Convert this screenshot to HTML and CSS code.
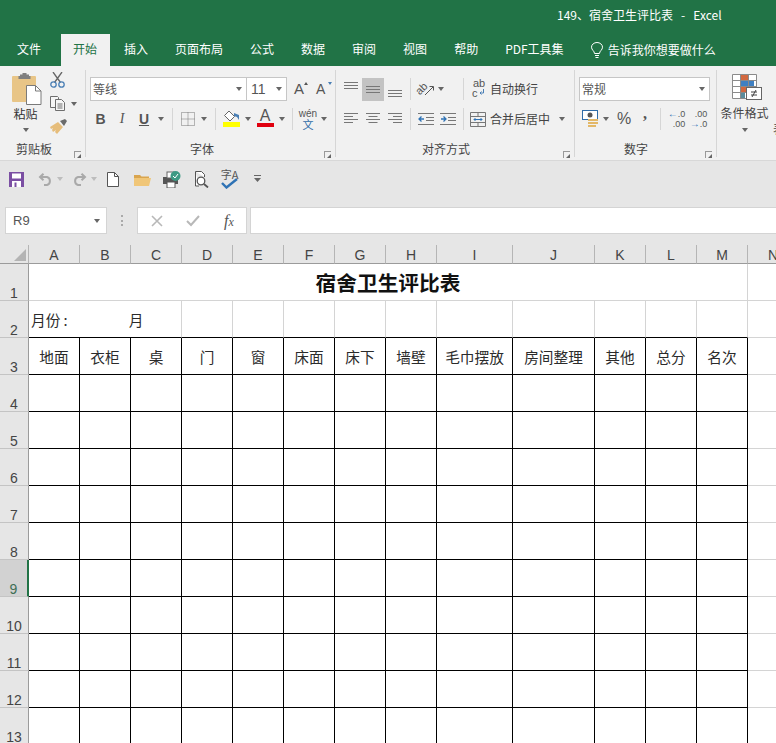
FILE: index.html
```html
<!DOCTYPE html>
<html lang="zh-CN">
<head>
<meta charset="utf-8">
<title>149、宿舍卫生评比表 - Excel</title>
<link rel="stylesheet" href="styles.css">
</head>
<body>
<header class="titlebar"><span class="doc-title">149、宿舍卫生评比表   -   Excel</span></header>
<nav class="tabs">
  <span class="tab first">文件</span><span class="tab on">开始</span><span class="tab">插入</span><span class="tab">页面布局</span><span class="tab">公式</span><span class="tab">数据</span><span class="tab">审阅</span><span class="tab">视图</span><span class="tab">帮助</span><span class="tab">PDF工具集</span>
  <span class="tell">
    <svg width="14" height="17" viewBox="0 0 14 17" fill="none" stroke="#fff" stroke-width="1"><path d="M4.5 11.5C4.5 9 1.5 8 1.5 5.2a5.5 4.7 0 0 1 11 0C12.5 8 9.5 9 9.5 11.5zM5 13.5h4M5.5 15.5h3"/></svg>
    告诉我你想要做什么
  </span>
</nav>

<section class="ribbon">
  <div class="group g-clip">
    <div class="clip-body">
      <div class="paste">
        <svg width="30" height="32" viewBox="0 0 30 32"><rect x="0" y="3" width="24" height="26" rx="1" fill="#e8c587"/><path d="M8 3V1.500h2.500V0h4v1.500H17V3h1.500v3h-12V3z" fill="#7f7f7f"/><path d="M14.500 12.500h9l5.500 5.500v13.500H14.500z" fill="#fff" stroke="#7a7a7a"/><path d="M23.500 12.500V18H29" fill="none" stroke="#7a7a7a"/></svg>
        <span class="paste-label">粘贴</span>
        <i class="caret paste-caret"></i>
      </div>
      <div class="clip-tools">
        <svg class="t-cut" width="15" height="16" viewBox="0 0 15 16" fill="none"><path d="M3 0l7.500 10.500M12 0L4.500 10.500" stroke="#666" stroke-width="1.300"/><circle cx="3.500" cy="12.500" r="2.700" stroke="#4a7fb5" stroke-width="1.300"/><circle cx="11.500" cy="12.500" r="2.700" stroke="#4a7fb5" stroke-width="1.300"/></svg>
        <div class="t-copy">
          <svg width="16" height="15" viewBox="0 0 16 15" fill="#f6f6f6" stroke="#6e6e6e"><path d="M.5.500h7l1 1v10H.5z"/><path d="M5.500 3.500h6l3 3v8h-9z"/><path d="M7.500 8h5M7.500 10h5M7.500 12h5" fill="none"/></svg>
          <i class="caret"></i>
        </div>
        <svg class="t-brush" width="17" height="15" viewBox="0 0 17 15"><path d="M10 2l5-2 2 2-3 5z" fill="#6b6b6b"/><path d="M0 8l8-5 5 5-6 7-2-2 1-2-3 2-1-2 1-2-2 1z" fill="#e6bd7b"/></svg>
      </div>
    </div>
    <div class="glabel"><span></span><span>剪贴板</span><i class="launcher"></i></div>
  </div>

  <div class="group g-font">
    <div class="font-r1">
      <div class="combo"><span>等线</span><i class="caret"></i></div>
      <div class="combo"><span class="num">11</span><i class="caret"></i></div>
      <span class="big-a"><b>A</b><i class="up"></i></span>
      <span class="big-a small"><b>A</b><i class="down"></i></span>
    </div>
    <div class="font-r2">
      <b class="fmt">B</b><i class="fmt ital">I</i><span class="fmt und">U</span><i class="caret"></i>
      <i class="vsep"></i>
      <svg width="14" height="14" viewBox="0 0 14 14" fill="none" stroke="#777" stroke-dasharray="1 1"><path d="M.5.500h13v13H.5zM7 .5v13M.5 7h13"/></svg><i class="caret"></i>
      <i class="vsep"></i>
      <svg class="fill" width="18" height="17" viewBox="0 0 18 17"><path d="M6 1l5.500 5.500L7 11 1.500 5.500z" fill="#fff" stroke="#666"/><path d="M11 3l5 2v5l-2-3-3-1z" fill="#4a7fb5"/><rect x="0" y="12" width="17" height="5" fill="#ffff00"/></svg><i class="caret"></i>
      <span class="font-color">A</span><i class="caret"></i>
      <i class="vsep"></i>
      <span class="wen"><span>wén</span><span class="wen-b">文</span></span><i class="caret"></i>
    </div>
    <div class="glabel"><span></span><span>字体</span><i class="launcher"></i></div>
  </div>

  <div class="group g-align">
    <div class="align-r1">
      <svg class="al" width="22" height="23" viewBox="0 0 22 23" stroke="#777"><path d="M4 4.500h14M4 7.500h14M4 10.500h14"/></svg>
      <svg class="al on" width="22" height="23" viewBox="0 0 22 23" stroke="#777"><path d="M4 8.500h14M4 11.500h14M4 14.500h14"/></svg>
      <svg class="al" width="22" height="23" viewBox="0 0 22 23" stroke="#777"><path d="M4 12.500h14M4 15.500h14M4 18.500h14"/></svg>
      <i class="vsep"></i>
      <svg width="21" height="20" viewBox="-2 -2 21 20" fill="none" stroke="#555"><text x="0" y="14" transform="rotate(-45 2 11)" class="svgt" stroke="none">ab</text><path d="M8 14l8-8M12.500 5.500H16.500V9.500"/></svg>
      <i class="caret"></i>
      <span></span>
      <i class="vsep"></i>
      <svg class="wrap-icon" width="15" height="24" viewBox="0 0 15 24"><text x="2" y="10" class="svgt">ab</text><text x="1" y="20" class="svgt">c</text><path d="M12.500 12v4H9m1.500-1.500L9 16l1.500 1.500" fill="none" stroke="#4a7fb5"/></svg>
      <span class="rlabel">自动换行</span>
    </div>
    <div class="align-r2">
      <svg width="22" height="14" viewBox="0 0 22 14" stroke="#777"><path d="M4 1.500h14M4 4.500h9M4 7.500h14M4 10.500h9"/></svg>
      <svg width="22" height="14" viewBox="0 0 22 14" stroke="#777"><path d="M4 1.500h14M6.500 4.500h9M4 7.500h14M6.500 10.500h9"/></svg>
      <svg width="22" height="14" viewBox="0 0 22 14" stroke="#777"><path d="M4 1.500h14M9 4.500h9M4 7.500h14M9 10.500h9"/></svg>
      <i class="vsep"></i>
      <svg width="16" height="14" viewBox="0 0 16 14" fill="none" stroke="#777"><path d="M0 1.500h16M8 5.500h8M8 8.500h8M0 12.500h16"/><path d="M1 7h5M3.500 4.500L1 7l2.500 2.500" stroke="#2f73b5" stroke-width="1.300"/></svg>
      <svg width="16" height="14" viewBox="0 0 16 14" fill="none" stroke="#777"><path d="M1 7h5M3.500 4.500L6 7 3.500 9.500" stroke="#2f73b5" stroke-width="1.300"/><path d="M0 1.500h16M8 5.500h8M8 8.500h8M0 12.500h16"/></svg>
      <i class="vsep"></i>
      <svg width="16" height="15" viewBox="0 0 16 15" fill="none" stroke="#777"><path d="M.5.500h15v14H.5zM.5 4.500h15M.5 10.500h15M8 .5v4M8 10.500v4"/><path d="M4 7.500h8M5.500 6L4 7.500 5.500 9M10.500 6L12 7.500 10.500 9" stroke="#2f73b5"/></svg>
      <span class="rlabel">合并后居中</span>
      <i class="caret"></i>
    </div>
    <div class="glabel"><span></span><span>对齐方式</span><i class="launcher"></i></div>
  </div>

  <div class="group g-num">
    <div class="combo num-combo"><span>常规</span><i class="caret"></i></div>
    <div class="num-r2">
      <svg width="17" height="18" viewBox="0 0 17 18"><rect x=".5" y=".5" width="15" height="9" fill="#fff" stroke="#2f6ca8"/><circle cx="8" cy="5" r="2.500" fill="#555"/><path d="M6 10h10M6 13h10M6 16h8" stroke="#e3b868" stroke-width="2"/></svg>
      <i class="caret"></i>
      <span class="pct">%</span>
      <span class="comma">,</span>
      <i class="vsep"></i>
      <span class="dec"><span><em>←</em>.0</span><span>.00</span></span>
      <span></span>
      <span class="dec"><span>.00</span><span><em>→</em>.0</span></span>
    </div>
    <div class="glabel"><span></span><span>数字</span><i class="launcher"></i></div>
  </div>

  <div class="group g-style">
    <div class="cond">
      <svg width="30" height="26" viewBox="0 0 30 26"><path d="M.5.500h24v24H.5z" fill="#fff" stroke="#8a8a8a"/><rect x="8" y="1" width="8" height="5" fill="#d2683f"/><rect x="8" y="6" width="14" height="6" fill="#3f80c2"/><rect x="8" y="12" width="10" height="6" fill="#d2683f"/><rect x="8" y="18" width="5" height="6" fill="#5b8c9c"/><path d="M8.500 0v25M16.500 0v25M.5 6.500h24M.5 12.500h24M.5 18.500h24" stroke="#8a8a8a" fill="none"/><rect x="14.500" y="13.500" width="15" height="12" fill="#fff" stroke="#666"/><path d="M19 18h6M19 21h6M24 16l-4 7" stroke="#444" fill="none"/></svg>
      <span class="cond-label">条件格式</span>
      <i class="caret"></i>
    </div>
    <span class="next-tool">表</span>
  </div>
</section>

<section class="qat">
  <svg class="m9" width="15" height="15" viewBox="0 0 15 15"><path d="M0 0h15v15H0z" fill="#7b4fa3"/><rect x="3" y="1.500" width="9" height="5" fill="#fff"/><rect x="3" y="9" width="9" height="6" fill="#fff"/><rect x="5.500" y="10.500" width="2" height="4.500" fill="#7b4fa3"/></svg>
  <svg class="m14" width="15" height="13" viewBox="0 0 15 13" fill="none" stroke="#a9a9a9" stroke-width="2"><path d="M2 4h7a4.200 4.200 0 0 1 0 8H6M5.500 .7L2 4l3.500 3.300"/></svg>
  <i class="caret faint m4"></i>
  <svg class="m9" width="15" height="13" viewBox="0 0 15 13" fill="none" stroke="#a9a9a9" stroke-width="2"><path d="M13 4H6a4.200 4.200 0 0 0 0 8h3M9.500 .7L13 4 9.500 7.300"/></svg>
  <i class="caret faint m4"></i>
  <svg class="m10" width="12" height="15" viewBox="0 0 12 15" fill="#fff" stroke="#555"><path d="M.5.500h7l4 4v10H.5z"/><path d="M7.500.5v4h4" fill="none"/></svg>
  <svg class="m15" width="17" height="13" viewBox="0 0 17 13"><path d="M0 2h6l1.500 1.500H15V6H0z" fill="#d9a54f"/><path d="M0 5h17l-2 8H0z" fill="#f0c678"/></svg>
  <svg class="m12" width="18" height="17" viewBox="0 0 18 17"><rect x="0" y="6" width="15" height="7" fill="#555"/><rect x="4" y="1" width="7" height="6" fill="#fff" stroke="#666"/><rect x="4" y="11" width="8" height="6" fill="#fff" stroke="#555"/><circle cx="12.500" cy="5" r="5" fill="#3d9a84"/><path d="M10 5l2 2 3-4" fill="none" stroke="#fff"/></svg>
  <svg class="m13" width="15" height="17" viewBox="0 0 15 17" fill="none" stroke="#555"><path d="M1.500.5h6l3 3V6M1.500.5V15H5" fill="#fff"/><circle cx="7" cy="10" r="3.800" fill="#fff" stroke-width="1.300"/><path d="M10 13l4 3.500" stroke-width="1.800"/></svg>
  <span class="spell m12"><span class="spell-t">字A</span><svg width="17" height="11" viewBox="0 0 17 11" fill="none" stroke="#2f73b5" stroke-width="2.400"><path d="M1 5l4.500 4.500L16 1"/></svg></span>
  <svg class="m16" width="7" height="8" viewBox="0 0 7 8" fill="#666"><path d="M0 0h7v1H0zM0 3h7L3.500 7z"/></svg>
</section>

<section class="fbar">
  <div class="namebox"><span>R9</span><i class="caret"></i></div>
  <span class="grip"></span>
  <div class="fbtns">
    <svg width="12" height="12" viewBox="0 0 12 12" stroke="#b8b8b8" stroke-width="1.600"><path d="M1 1l10 10M11 1L1 11"/></svg>
    <svg width="14" height="12" viewBox="0 0 14 12" fill="none" stroke="#b8b8b8" stroke-width="2"><path d="M1 6l4 4 8-9"/></svg>
    <span class="fx">f<small>x</small></span>
  </div>
  <div class="finput"></div>
</section>

<main class="sheet">
  <div class="corner"><i></i></div><div class="ch">A</div><div class="ch">B</div><div class="ch">C</div><div class="ch">D</div><div class="ch">E</div><div class="ch">F</div><div class="ch">G</div><div class="ch">H</div><div class="ch">I</div><div class="ch">J</div><div class="ch">K</div><div class="ch">L</div><div class="ch">M</div><div class="ch">N</div>

  <div class="rh">1</div><div class="c title">宿舍卫生评比表</div><div class="c"></div>

  <div class="rh">2</div><div class="c month k"><span>月份 :</span><span>月</span></div><div class="c k"></div><div class="c k"></div><div class="c k"></div><div class="c k"></div><div class="c k"></div><div class="c k"></div><div class="c k"></div><div class="c k"></div><div class="c k"></div><div class="c k"></div><div class="c"></div>

  <div class="rh">3</div><div class="b t">地面</div><div class="b t">衣柜</div><div class="b t">桌</div><div class="b t">门</div><div class="b t">窗</div><div class="b t">床面</div><div class="b t">床下</div><div class="b t">墙壁</div><div class="b t">毛巾摆放</div><div class="b t">房间整理</div><div class="b t">其他</div><div class="b t">总分</div><div class="b t">名次</div><div class="c"></div>

  <div class="rh">4</div><div class="b"></div><div class="b"></div><div class="b"></div><div class="b"></div><div class="b"></div><div class="b"></div><div class="b"></div><div class="b"></div><div class="b"></div><div class="b"></div><div class="b"></div><div class="b"></div><div class="b"></div><div class="c"></div>
  <div class="rh">5</div><div class="b"></div><div class="b"></div><div class="b"></div><div class="b"></div><div class="b"></div><div class="b"></div><div class="b"></div><div class="b"></div><div class="b"></div><div class="b"></div><div class="b"></div><div class="b"></div><div class="b"></div><div class="c"></div>
  <div class="rh">6</div><div class="b"></div><div class="b"></div><div class="b"></div><div class="b"></div><div class="b"></div><div class="b"></div><div class="b"></div><div class="b"></div><div class="b"></div><div class="b"></div><div class="b"></div><div class="b"></div><div class="b"></div><div class="c"></div>
  <div class="rh">7</div><div class="b"></div><div class="b"></div><div class="b"></div><div class="b"></div><div class="b"></div><div class="b"></div><div class="b"></div><div class="b"></div><div class="b"></div><div class="b"></div><div class="b"></div><div class="b"></div><div class="b"></div><div class="c"></div>
  <div class="rh">8</div><div class="b"></div><div class="b"></div><div class="b"></div><div class="b"></div><div class="b"></div><div class="b"></div><div class="b"></div><div class="b"></div><div class="b"></div><div class="b"></div><div class="b"></div><div class="b"></div><div class="b"></div><div class="c"></div>
  <div class="rh sel">9</div><div class="b"></div><div class="b"></div><div class="b"></div><div class="b"></div><div class="b"></div><div class="b"></div><div class="b"></div><div class="b"></div><div class="b"></div><div class="b"></div><div class="b"></div><div class="b"></div><div class="b"></div><div class="c"></div>
  <div class="rh">10</div><div class="b"></div><div class="b"></div><div class="b"></div><div class="b"></div><div class="b"></div><div class="b"></div><div class="b"></div><div class="b"></div><div class="b"></div><div class="b"></div><div class="b"></div><div class="b"></div><div class="b"></div><div class="c"></div>
  <div class="rh">11</div><div class="b"></div><div class="b"></div><div class="b"></div><div class="b"></div><div class="b"></div><div class="b"></div><div class="b"></div><div class="b"></div><div class="b"></div><div class="b"></div><div class="b"></div><div class="b"></div><div class="b"></div><div class="c"></div>
  <div class="rh">12</div><div class="b"></div><div class="b"></div><div class="b"></div><div class="b"></div><div class="b"></div><div class="b"></div><div class="b"></div><div class="b"></div><div class="b"></div><div class="b"></div><div class="b"></div><div class="b"></div><div class="b"></div><div class="c"></div>
  <div class="rh">13</div><div class="b"></div><div class="b"></div><div class="b"></div><div class="b"></div><div class="b"></div><div class="b"></div><div class="b"></div><div class="b"></div><div class="b"></div><div class="b"></div><div class="b"></div><div class="b"></div><div class="b"></div><div class="c"></div>
</main>
</body>
</html>
```
FILE: styles.css
```css
* { box-sizing: border-box; }
html, body { margin: 0; width: 776px; height: 743px; overflow: hidden; }
body { font: 12px/1.2 "Noto Sans CJK SC", "Liberation Sans", sans-serif; color: #444; background: #fff; }
i, em { font-style: normal; }
svg { display: block; }

.titlebar { height: 30px; background: #217346; color: #fff; padding-left: 557px; line-height: 30px; white-space: pre; }

.tabs { height: 36px; background: #217346; color: #fff; display: flex; align-items: flex-end; padding-left: 5px; gap: 3px; }
.tab { height: 32px; line-height: 29px; padding: 0 12px; }
.tab.first { margin-right: 5px; }
.tab.on { background: #f1f1f1; color: #217346; padding-right: 13px; margin-right: -1px; }
.tell { display: flex; align-items: center; gap: 4px; height: 30px; margin-left: 11px; align-self: flex-end; padding-bottom: 1px; }

.ribbon { height: 95px; background: #f1f1f1; border-bottom: 1px solid #d8d8d8; display: flex; overflow: hidden; }
.group { margin: 4px 0 3px; border-right: 1px solid #d6d6d6; display: flex; flex-direction: column; flex: none; }
.glabel { margin-top: auto; height: 18px; line-height: 20px; display: grid; color: #444; padding-right: 4px; }
.launcher { justify-self: end; align-self: end; width: 7px; height: 7px; margin-bottom: 1px; border-left: 1px solid #999; border-top: 1px solid #999; position: relative; }
.launcher::after { content: ""; position: absolute; right: 0; bottom: 0; border: 2px solid transparent; border-right-color: #666; border-bottom-color: #666; }
.g-clip .glabel { grid-template-columns: 16px auto 1fr; }
.g-font .glabel { grid-template-columns: 100px auto 1fr; }
.g-align .glabel { grid-template-columns: 82px auto 1fr; }
.g-num .glabel { grid-template-columns: 45px auto 1fr; }

.caret { display: block; width: 0; height: 0; border: 3.500px solid transparent; border-top: 4px solid #666; border-bottom: 0; justify-self: center; flex: none; }
.caret.faint { border-top-color: #bdbdbd; }
.vsep { display: block; width: 1px; height: 22px; background: #d6d6d6; justify-self: center; }

.g-clip { width: 86px; }
.clip-body { display: flex; }
.paste { width: 41px; margin: 0 2px 0 5px; padding-top: 3px; display: flex; flex-direction: column; align-items: center; }
.paste svg { margin-left: 2px; }
.paste-label { margin-top: 0; line-height: 18px; color: #333; }
.paste-caret { margin-top: 5px; }
.clip-tools { padding: 2px 0 0 2px; }
.t-copy { display: flex; align-items: center; gap: 5px; margin-top: 8px; }
.t-brush { margin-top: 8px; }

.g-font { width: 250px; padding: 7px 0 0 4px; }
.font-r1 { display: grid; grid-template-columns: 157px 40px 7px 11px 11px 12px; }
.combo { height: 24px; background: #fff; border: 1px solid #c6c6c6; display: flex; align-items: center; justify-content: space-between; padding: 0 4px 0 2px; color: #555; }
.combo + .combo { margin-left: -1px; }
.num { font-family: "Liberation Sans", sans-serif; font-size: 14px; margin-left: 2px; }
.big-a { grid-column: 4; display: block; position: relative; font: 15px/24px "Liberation Sans", sans-serif; color: #555; }
.big-a.small { grid-column: 6; font-size: 14px; }
.big-a b { font-weight: 400; }
.up, .down { position: absolute; right: -3px; top: 5px; border: 2.500px solid transparent; }
.up { border-bottom: 3px solid #555; border-top: 0; }
.down { border-top: 3px solid #4a7fb5; border-bottom: 0; right: -4px; }

.font-r2 { display: grid; grid-template-columns: 21px 22px 22px 12px 11px 19px 14px 8px 25px 7px 28px 6px 14px 18px 14px; align-items: center; justify-items: center; height: 22px; margin-top: 7px; }
.fmt { font: 14px/22px "Liberation Sans", sans-serif; color: #555; }
b.fmt { font-weight: 700; }
.ital { font-family: "Liberation Serif", serif; font-style: italic; }
.und { text-decoration: underline; font-weight: 700; }
.fill { margin-top: -2px; }
.font-color { width: 17px; height: 18px; margin-top: -2px; font: 16px/14px "Liberation Sans", sans-serif; text-align: center; color: #555; border-bottom: 4px solid #e0000f; }
.wen { display: flex; flex-direction: column; align-items: center; font: 10px/11px "Liberation Sans", sans-serif; color: #555; }
.wen-b { font: 11px/11px "Noto Sans CJK SC", sans-serif; color: #2f6ca8; }

.g-align { width: 239px; padding: 7px 0 0 4px; }
.align-r1, .align-r2 { display: grid; align-items: center; justify-items: center; }
.align-r1 { grid-template-columns: 22px 22px 22px 9px 21px 10px 13px 8px 23px auto; height: 24px; }
.align-r2 { grid-template-columns: 22px 22px 22px 9px 21px 24px 6px 24px 61px 22px; height: 22px; margin-top: 7px; }
.al.on { background: #c3c3c3; }
.rlabel { justify-self: start; color: #444; }
.svgt { font: 11px "Liberation Sans", sans-serif; fill: #555; }

.g-num { width: 142px; padding: 7px 0 0 4px; }
.num-combo { width: 131px; }
.num-r2 { display: grid; grid-template-columns: 22px 9px 28px 14px 17px 15px 7px 15px; align-items: center; justify-items: center; height: 22px; margin-top: 7px; }
.pct { font: 16px/22px "Liberation Sans", sans-serif; color: #555; }
.comma { font: 700 16px/16px "Liberation Serif", serif; color: #555; margin-top: -10px; }
.dec { display: flex; flex-direction: column; align-items: flex-end; font: 9px/10px "Liberation Sans", sans-serif; color: #555; white-space: nowrap; }
.dec em { color: #2f73b5; font-size: 10px; }

.g-style { border: 0; flex-direction: row; }
.cond { width: 51px; margin-left: 2px; padding-top: 4px; display: flex; flex-direction: column; align-items: center; }
.cond svg { flex: none; margin-left: 4px; }
.cond-label { margin-top: 4px; line-height: 18px; white-space: nowrap; }
.cond .caret { margin-top: 6px; }
.next-tool { padding: 50px 0 0 3px; width: 16px; line-height: 18px; }

.qat { height: 36px; background: #e6e6e6; display: flex; align-items: center; }
.m4 { margin-left: 4px; }
.m9 { margin-left: 9px; }
.m10 { margin-left: 10px; }
.m12 { margin-left: 12px; }
.m13 { margin-left: 13px; }
.m14 { margin-left: 14px; }
.m15 { margin-left: 15px; }
.m16 { margin-left: 16px; }
.spell { display: flex; flex-direction: column; align-items: center; width: 17px; height: 20px; }
.spell-t { font-size: 11px; line-height: 10px; color: #555; white-space: nowrap; }
.spell svg { margin-top: -1px; }

.fbar { height: 48px; background: #e6e6e6; display: flex; padding: 10px 0 11px 5px; }
.namebox { width: 102px; background: #fff; border: 1px solid #d4d4d4; display: flex; align-items: center; justify-content: space-between; padding: 0 6px 0 7px; font: 13px "Liberation Sans", sans-serif; color: #555; }
.grip { width: 2px; height: 11px; margin: 8px 14px 0 14px; border-left: 2px dotted #aaa; }
.fbtns { width: 110px; background: #fff; border: 1px solid #d4d4d4; display: grid; grid-template-columns: 37px 36px 36px; align-items: center; justify-items: center; }
.fx { font: italic 16px "Liberation Serif", serif; color: #555; }
.fx small { font-size: 12px; }
.finput { flex: 1; margin-left: 3px; background: #fff; border: 1px solid #d4d4d4; border-right: 0; }

.sheet { display: grid; grid-template-columns: 29px 51px 51px 51px 51px 51px 51px 51px 51px 76px 82px 51px 51px 51px 51px; grid-template-rows: 19px; grid-auto-rows: 37px; width: 798px; }
.corner { background: #e6e6e6; border-right: 1px solid #b5b5b5; border-bottom: 1px solid #9b9b9b; position: relative; }
.corner i { position: absolute; right: 2px; bottom: 2px; border-style: solid; border-width: 0 0 12px 12px; border-color: transparent transparent #b4b4b4 transparent; }
.ch { background: #e6e6e6; border-right: 1px solid #b5b5b5; border-bottom: 1px solid #9b9b9b; text-align: center; font: 14px/21px "Liberation Sans", sans-serif; color: #444; }
.rh { background: #e6e6e6; border-right: 1px solid #9b9b9b; border-bottom: 1px solid #c4c4c4; text-align: center; font: 14px/14px "Liberation Sans", sans-serif; color: #444; display: flex; align-items: flex-end; justify-content: center; }
.rh.sel { background: #d2d2d2; border-right: 2px solid #217346; color: #3f6f56; }
.c { border-right: 1px solid #d4d4d4; border-bottom: 1px solid #d4d4d4; }
.b { border-right: 1px solid #000; border-bottom: 1px solid #000; }
.c.k { border-bottom-color: #000; }
.t, .title, .month { font-size: 14.670px; color: #2b2b2b; display: flex; align-items: center; }
.t { justify-content: center; padding-top: 2px; }
.title { grid-column: span 13; justify-content: center; font-size: 20.700px; font-weight: 700; color: #111; }
.month { grid-column: span 3; padding: 2px 0 0 2px; gap: 61px; }
```
